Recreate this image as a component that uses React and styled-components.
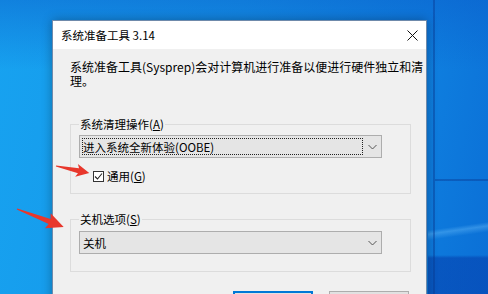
import styled, { createGlobalStyle } from 'styled-components'

const GlobalStyle = createGlobalStyle`
  html, body {
    margin: 0;
    padding: 0;
  }
  body {
    width: 488px;
    height: 294px;
    overflow: hidden;
    font-family: "Noto Sans CJK SC", "Noto Sans", sans-serif;
  }
`

const Desktop = styled.div`
  position: relative;
  width: 488px;
  height: 294px;
  overflow: hidden;
  box-sizing: border-box;
  padding: 20px 0 0 52px;
  background:
    linear-gradient(to right, transparent 433px, rgba(8, 60, 150, 0.45) 433px, rgba(8, 60, 150, 0.45) 435px, transparent 435px),
    linear-gradient(to bottom, transparent 179px, rgba(8, 60, 150, 0.45) 179px, rgba(8, 60, 150, 0.45) 181px, transparent 181px) 435px 0 / 60px 294px no-repeat,
    linear-gradient(172deg, transparent 228px, rgba(120, 200, 255, 0.35) 232px, transparent 238px) 428px 0 / 60px 294px no-repeat,
    linear-gradient(to bottom, transparent 255px, rgba(4, 60, 170, 0.55) 258px) 428px 0 / 60px 294px no-repeat,
    linear-gradient(to bottom, rgba(10, 90, 200, 0.45) 0, transparent 70px),
    linear-gradient(100deg, #17a2f0 0%, #1596e8 45%, #0f80e0 80%, #0b6fd6 100%);
`

const Window = styled.div`
  width: 375px;
  height: 290px;
  box-sizing: border-box;
  border: 1px solid #6f8aab;
  border-bottom: none;
  background: #f0f0f0;
  box-shadow: 0 0 10px rgba(0, 0, 0, 0.3);
  font-size: 11.5px;
  color: #000;
`

const TitleBar = styled.div`
  height: 28px;
  display: flex;
  align-items: center;
  background: #fff;
  padding-left: 8px;
`

const Title = styled.div`
  flex: 1;
  font-size: 11.5px;
  line-height: 14px;
`

const CloseButton = styled.div`
  width: 28px;
  height: 28px;
  display: flex;
  align-items: center;
  justify-content: center;
`

const Body = styled.div`
  padding: 11px 15px 0 17px;
`

const Description = styled.div`
  font-size: 12px;
  line-height: 14px;
  white-space: nowrap;
`

const Group = styled.fieldset`
  margin: ${({ $top }) => $top}px 0 0;
  padding: ${({ $padTop }) => $padTop}px 28px ${({ $padBottom }) => $padBottom}px 8px;
  border: 1px solid #dcdcdc;
  min-width: 0;
`

const Legend = styled.legend`
  padding: 0 1px;
  line-height: 14px;
  font-size: 11.5px;
  color: #000;
`

const Combo = styled.div`
  height: 23px;
  box-sizing: border-box;
  display: flex;
  border: 1px solid #adadad;
  background: #e5e5e5;
`

const ComboText = styled.div`
  flex: 1;
  display: flex;
  align-items: center;
  margin: 2px 0 2px 2px;
  border: 1px ${({ $focused }) => ($focused ? 'dotted #222' : 'solid transparent')};
  line-height: 14px;
  white-space: nowrap;
`

const ComboArrow = styled.div`
  width: 18px;
  display: flex;
  align-items: center;
  justify-content: center;
`

const CheckRow = styled.div`
  margin-top: 11px;
  padding-left: 14px;
  display: flex;
  align-items: center;
  gap: 3px;
  line-height: 14px;
`

const CheckBox = styled.div`
  width: 11px;
  height: 11px;
  box-sizing: border-box;
  border: 1px solid #333;
  background: #fff;
  display: flex;
  align-items: center;
  justify-content: center;
`

const CheckLabel = styled.span`
  white-space: nowrap;
`

const ButtonRow = styled.div`
  margin-top: 19px;
  display: flex;
  justify-content: flex-end;
  gap: 16px;
  padding-right: 2px;
`

const Button = styled.div`
  width: 80px;
  height: 23px;
  box-sizing: border-box;
  border: 1px solid ${({ $primary }) => ($primary ? '#0078d7' : '#adadad')};
  box-shadow: ${({ $primary }) => ($primary ? 'inset 0 0 0 1px #0078d7' : 'none')};
  background: #e1e1e1;
`

const Arrows = styled.svg`
  position: absolute;
  left: 0;
  top: 0;
  pointer-events: none;
`

const Chevron = () => (
  <svg width="9" height="6" viewBox="0 0 9 6">
    <path d="M0.5 1 L4.5 5 L8.5 1" fill="none" stroke="#555" strokeWidth="1" />
  </svg>
)

function arrowPoints(len, head, half) {
  return [
    [0, -0.6],
    [len - head + 2, -2.6],
    [len - head, -half],
    [len, 0],
    [len - head, half],
    [len - head + 2, 2.6],
    [0, 0.6],
  ].map((p) => p.join(',')).join(' ')
}

const arrows = [
  { x: 56, y: 166, angle: 12, len: 34, head: 13, half: 6.5 },
  { x: 17, y: 209, angle: 21, len: 50, head: 17, half: 8 },
]

export default function App() {
  return (
    <Desktop>
      <GlobalStyle />
      <Window>
        <TitleBar>
          <Title>系统准备工具 3.14</Title>
          <CloseButton>
            <svg width="11" height="11" viewBox="0 0 11 11">
              <path d="M0.5 0.5 L10.5 10.5 M10.5 0.5 L0.5 10.5" stroke="#111" strokeWidth="1" />
            </svg>
          </CloseButton>
        </TitleBar>
        <Body>
          <Description>
            系统准备工具(Sysprep)会对计算机进行准备以便进行硬件独立和清
            <br />
            理。
          </Description>
          <Group $top={29} $padTop={4} $padBottom={10}>
            <Legend>系统清理操作(<u>A</u>)</Legend>
            <Combo>
              <ComboText $focused>进入系统全新体验(OOBE)</ComboText>
              <ComboArrow><Chevron /></ComboArrow>
            </Combo>
            <CheckRow>
              <CheckBox>
                <svg width="9" height="9" viewBox="0 0 9 9">
                  <path d="M1 4.5 L3.5 7 L8 1.5" fill="none" stroke="#222" strokeWidth="1.1" />
                </svg>
              </CheckBox>
              <CheckLabel>通用(<u>G</u>)</CheckLabel>
            </CheckRow>
          </Group>
          <Group $top={18} $padTop={5} $padBottom={17}>
            <Legend>关机选项(<u>S</u>)</Legend>
            <Combo>
              <ComboText>关机</ComboText>
              <ComboArrow><Chevron /></ComboArrow>
            </Combo>
          </Group>
          <ButtonRow>
            <Button $primary />
            <Button />
          </ButtonRow>
        </Body>
      </Window>
      <Arrows width="488" height="294" viewBox="0 0 488 294">
        {arrows.map((a, i) => (
          <g key={i} transform={`translate(${a.x} ${a.y}) rotate(${a.angle})`}>
            <polygon points={arrowPoints(a.len, a.head, a.half)} fill="#e8372c" />
          </g>
        ))}
      </Arrows>
    </Desktop>
  )
}
